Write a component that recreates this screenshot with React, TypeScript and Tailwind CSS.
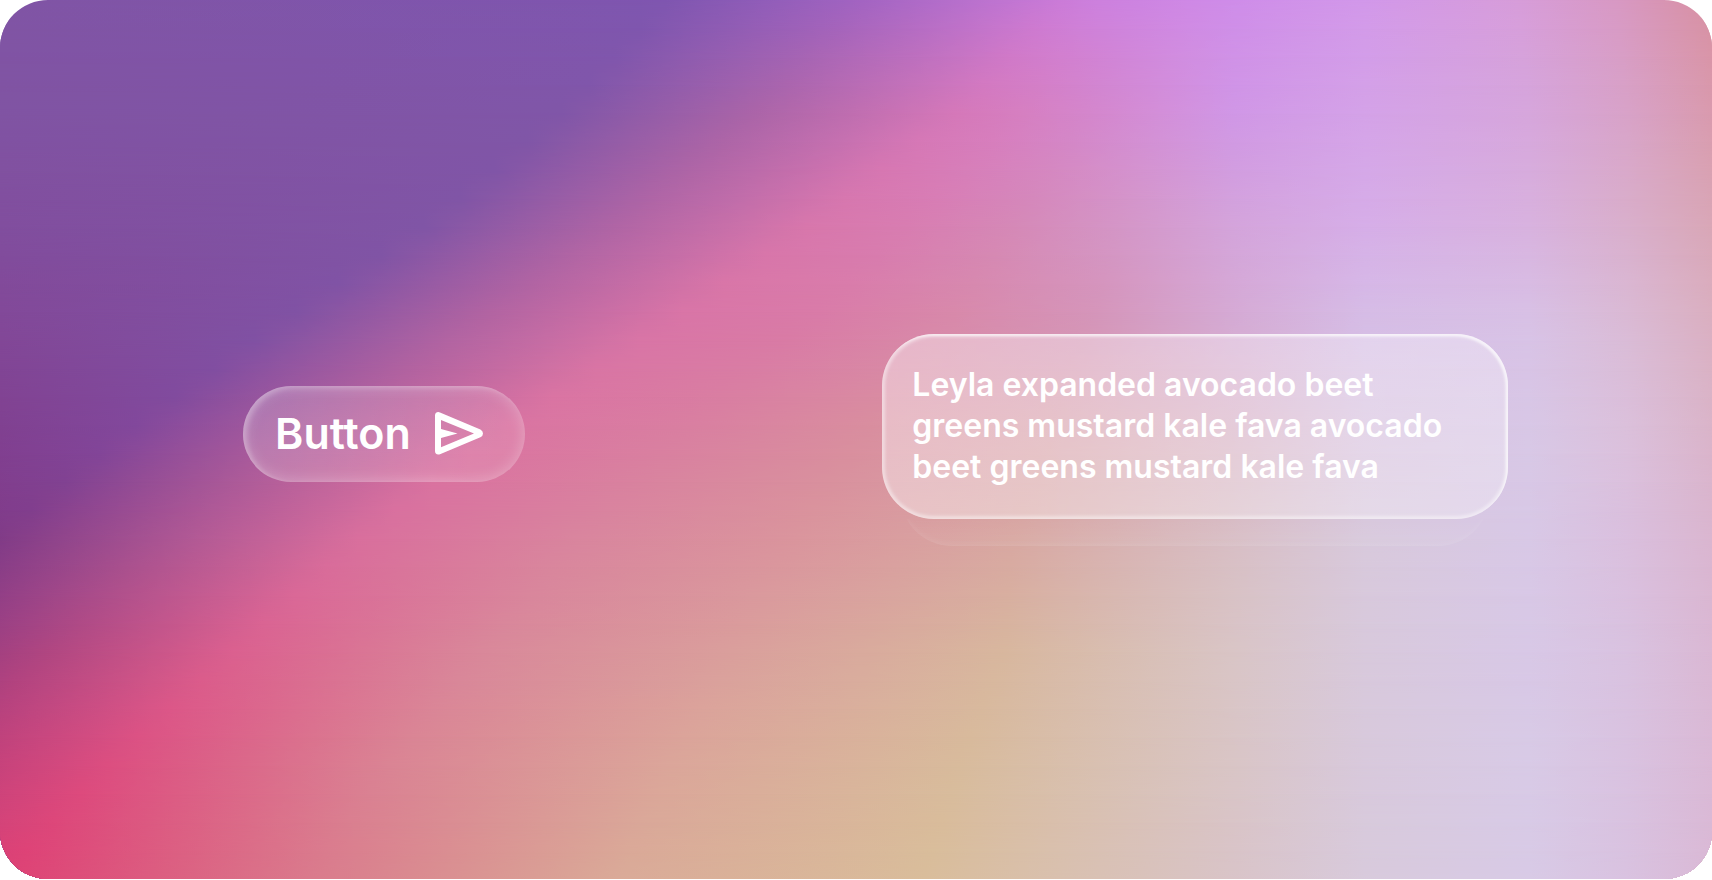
type Row = { y: number; xs: number[]; colors: number[] };

const WIDTH = 1568;
const HEIGHT = 806;
const LEFT = -600;
const STEP = 26;

// Every row holds the same stops in the same order (purple, its edge, the pink
// ridge, ...), so both position and colour can be blended between rows
const keyRows: Row[] = [
  { y: 0, xs: [0, 610, 790, 970, 1005, 1045, 1085, 1130, 1250, 1390, 1480, 1568], colors: [0x8055a5, 0x7f56b0, 0xa364c2, 0xcb7bd8, 0xcd80de, 0xcd84e2, 0xcf88e5, 0xcf8de9, 0xd298ea, 0xd79dda, 0xd899c4, 0xd890a2] },
  { y: 100, xs: [0, 520, 700, 880, 940, 1000, 1065, 1130, 1250, 1400, 1490, 1568], colors: [0x8054a3, 0x8056a8, 0xac65a8, 0xd578ba, 0xd67fc2, 0xd486cd, 0xd38fda, 0xd096e6, 0xd4a2e8, 0xd6a6dc, 0xd8a2c8, 0xd99aae] },
  { y: 200, xs: [0, 400, 575, 750, 840, 935, 1030, 1130, 1250, 1400, 1490, 1568], colors: [0x814e9e, 0x8055a6, 0xb065a5, 0xd877ac, 0xd87db2, 0xd589b8, 0xd496c8, 0xd4a3dc, 0xd6ade8, 0xd8b1de, 0xd9aecb, 0xd9a6b6] },
  { y: 300, xs: [0, 250, 428, 605, 735, 865, 998, 1130, 1250, 1400, 1490, 1568], colors: [0x824898, 0x8052a4, 0xb264a2, 0xd975a6, 0xd97ba6, 0xd889a9, 0xd595b8, 0xd5abd4, 0xd6bee6, 0xd8c2e6, 0xdabbd6, 0xdab0c2] },
  { y: 400, xs: [0, 110, 280, 450, 620, 790, 960, 1130, 1250, 1400, 1490, 1568], colors: [0x804090, 0x82479b, 0xb0609e, 0xda74a2, 0xd97fa0, 0xd98e9e, 0xd8a0a8, 0xd8b2c4, 0xd8c2de, 0xd8c8e6, 0xdbc0dc, 0xdab4ca] },
  { y: 500, xs: [-200, -10, 155, 320, 522, 725, 927, 1130, 1250, 1400, 1490, 1568], colors: [0x803080, 0x803a86, 0xae5693, 0xd96f9d, 0xd9859e, 0xda959d, 0xd8a8a2, 0xd8bfc5, 0xd8c9dc, 0xd8c8e6, 0xdabfde, 0xdab6d0] },
  { y: 600, xs: [-300, -130, 40, 210, 440, 670, 920, 1130, 1250, 1400, 1490, 1568], colors: [0x803080, 0x803080, 0xb04681, 0xdb608f, 0xd9889a, 0xda9f9c, 0xd8b79e, 0xd9c5c6, 0xd8c9dc, 0xd8c8e6, 0xd9c2e0, 0xdab8d4] },
  { y: 700, xs: [-400, -240, -70, 100, 357, 615, 880, 1130, 1250, 1400, 1490, 1568], colors: [0x803080, 0x803080, 0xb83a78, 0xdc4e80, 0xda8494, 0xdba69a, 0xd8bb9c, 0xd9c5c6, 0xd8c9dc, 0xd8cae6, 0xd9c2e0, 0xdab9d6] },
  { y: 806, xs: [-500, -400, -200, 0, 282, 565, 847, 1130, 1250, 1400, 1490, 1568], colors: [0x803080, 0x803080, 0xc03a76, 0xde4074, 0xda7a8c, 0xdaaa98, 0xd9bd9b, 0xd9c4c8, 0xd8cadc, 0xd8cae6, 0xd9c2e0, 0xdab9d6] },
];

const lerp = (a: number, b: number, t: number) => a + (b - a) * t;

function mix(a: number, b: number, t: number) {
  const channel = (shift: number) => Math.round(lerp((a >> shift) & 255, (b >> shift) & 255, t));
  return (channel(16) << 16) | (channel(8) << 8) | channel(0);
}

function rowAt(y: number): Row {
  const next = Math.max(1, keyRows.findIndex((row) => row.y >= y));
  const a = keyRows[next - 1];
  const b = keyRows[next];
  const t = (y - a.y) / (b.y - a.y);
  return {
    y,
    xs: a.xs.map((x, i) => lerp(x, b.xs[i], t)),
    colors: a.colors.map((color, i) => mix(color, b.colors[i], t)),
  };
}

const rows = Array.from({ length: HEIGHT / STEP + 1 }, (_, i) => rowAt(i * STEP));

function Backdrop() {
  return (
    <svg
      aria-hidden="true"
      viewBox={`0 0 ${WIDTH} ${HEIGHT}`}
      preserveAspectRatio="none"
      className="absolute inset-0 size-full"
    >
      <defs>
        {rows.map((row, i) => (
          <linearGradient key={row.y} id={`row-${i}`} gradientUnits="userSpaceOnUse" x1={LEFT} x2={WIDTH} y1="0" y2="0">
            {row.xs.map((x, j) => (
              <stop
                key={j}
                offset={(x - LEFT) / (WIDTH - LEFT)}
                stopColor={`#${row.colors[j].toString(16).padStart(6, "0")}`}
              />
            ))}
          </linearGradient>
        ))}
        {rows.slice(1).map((row, i) => (
          <linearGradient
            key={row.y}
            id={`fade-${i + 1}`}
            gradientUnits="userSpaceOnUse"
            x1="0"
            x2="0"
            y1={rows[i].y}
            y2={row.y}
          >
            <stop offset="0" stopColor="#fff" stopOpacity="0" />
            <stop offset="1" stopColor="#fff" />
          </linearGradient>
        ))}
        {rows.slice(1).map((row, i) => (
          <mask key={row.y} id={`mask-${i + 1}`} maskUnits="userSpaceOnUse" x="0" y="0" width={WIDTH} height={HEIGHT}>
            <rect width={WIDTH} height={HEIGHT} fill={`url(#fade-${i + 1})`} />
          </mask>
        ))}
      </defs>
      {rows.map((row, i) => (
        <rect
          key={row.y}
          width={WIDTH}
          height={HEIGHT}
          fill={`url(#row-${i})`}
          mask={i > 0 ? `url(#mask-${i})` : undefined}
        />
      ))}
    </svg>
  );
}

function SendIcon() {
  return (
    <svg aria-hidden="true" viewBox="0 0 48 43" className="h-[43px] w-12 shrink-0" fill="currentColor">
      <path
        fillRule="evenodd"
        d="M3.4 0Q4.3 0 5 .4L45.4 17.5Q48 18.9 48 21.4Q48 23.9 45.4 25.2L5 42.3Q4.2 42.6 3.3 42.6Q0 42.4 0 39V3.6Q0 .2 3.4 0ZM6 8V17L22.5 21.4L6 26V35.2L39 21.4Z"
      />
    </svg>
  );
}

function GlassButton() {
  return (
    <button
      type="button"
      className="mb-3 flex h-24 items-center gap-6 rounded-full bg-linear-to-r from-white/20 to-white/10 pr-[42px] pl-8 text-[43px] leading-none font-semibold text-white shadow-[inset_4px_2px_5px_rgba(255,255,255,0.2),inset_0_0_16px_rgba(255,255,255,0.3)]"
    >
      Button
      <SendIcon />
    </button>
  );
}

function GlassCard() {
  return (
    <div className="w-[626px] max-w-full">
      <div className="rounded-[52px] bg-linear-to-r from-white/40 to-white/30 pt-[30px] pr-10 pb-8 pl-[30px] shadow-[inset_0_0_3px_3px_rgba(255,255,255,0.35),inset_0_0_6px_2px_rgba(255,255,255,0.2),inset_-2px_2px_2px_rgba(255,255,255,0.5)]">
        <p className="text-[32px] leading-[41px] font-semibold text-white">
          Leyla expanded avocado beet greens mustard kale fava avocado beet greens mustard kale fava
        </p>
      </div>
      {/* Second sheet peeking out below */}
      <div className="mx-[18px] flex h-[27px] items-end overflow-hidden">
        <div className="h-28 w-full shrink-0 rounded-[52px] bg-linear-to-b from-transparent from-75% to-white/5 shadow-[inset_0_-2px_6px_rgba(255,255,255,0.08)]" />
      </div>
    </div>
  );
}

export default function App() {
  return (
    <main className="relative isolate flex min-h-[calc(100vh-1px)] items-center justify-between gap-12 overflow-hidden rounded-[48px] pr-[11.9%] pl-[14.2%] font-['Inter',sans-serif]">
      <Backdrop />
      <div className="relative">
        <GlassButton />
      </div>
      <div className="relative">
        <GlassCard />
      </div>
    </main>
  );
}
